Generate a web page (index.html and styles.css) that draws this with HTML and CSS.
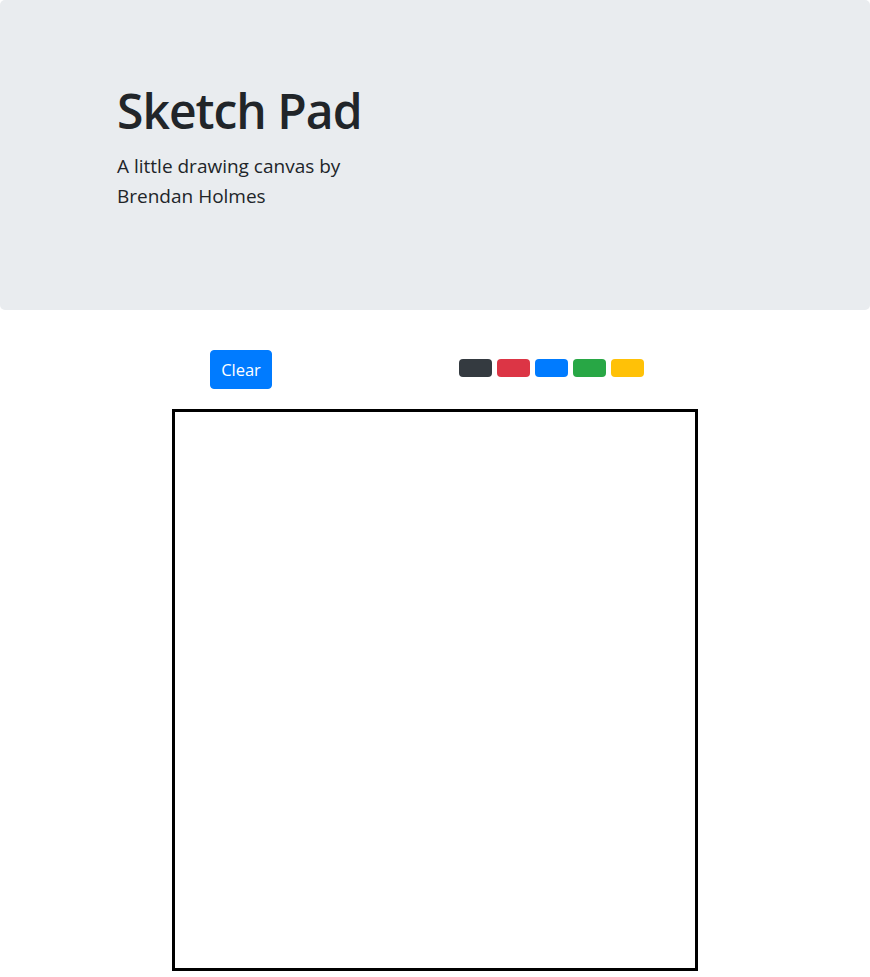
FILE: index.html
```html
<!DOCTYPE html>
<html lang="en">
<head>
<meta charset="utf-8">
<title>Sketch Pad</title>
<link rel="stylesheet" href="styles.css">
</head>
<body>
<header class="jumbotron">
  <div class="hero">
    <h1 class="title">Sketch Pad</h1>
    <p class="lead">A little drawing canvas by<br>Brendan Holmes</p>
  </div>
</header>
<main class="pad">
  <div class="controls">
    <button class="btn-clear" type="button">Clear</button>
    <div class="swatches">
      <span class="swatch swatch-dark"></span>
      <span class="swatch swatch-red"></span>
      <span class="swatch swatch-blue"></span>
      <span class="swatch swatch-green"></span>
      <span class="swatch swatch-yellow"></span>
    </div>
  </div>
  <div class="canvas"></div>
</main>
</body>
</html>
```
FILE: styles.css
```css
html, body {
  margin: 0;
  padding: 0;
  background: #fff;
}
body {
  font-family: "Open Sans", "Noto Sans", sans-serif;
  color: #212529;
}
.jumbotron {
  background: #e9ecef;
  border-radius: 5px;
  height: 310px;
  box-sizing: border-box;
  padding: 82px 0 0 117px;
}
.title {
  margin: 0;
  font-size: 48px;
  font-weight: 600;
  line-height: 58px;
  letter-spacing: -1px;
}
.lead {
  margin: 11px 0 0;
  font-size: 19px;
  line-height: 30px;
  font-weight: 400;
}
.pad {
  display: flex;
  flex-direction: column;
  align-items: center;
}
.controls {
  width: 870px;
  box-sizing: border-box;
  padding-left: 210px;
  margin-top: 40px;
  display: flex;
  align-items: flex-start;
}
.btn-clear {
  font-family: inherit;
  font-size: 16.5px;
  line-height: 24px;
  color: #fff;
  background: #007bff;
  border: 1px solid #007bff;
  border-radius: 4px;
  padding: 6px 0;
  width: 62px;
  height: 39px;
  box-sizing: border-box;
  text-align: center;
}
.swatches {
  display: flex;
  gap: 5px;
  margin-left: 187px;
  margin-top: 9px;
}
.swatch {
  display: block;
  width: 33px;
  height: 18px;
  border-radius: 4px;
}
.swatch-dark { background: #343a40; }
.swatch-red { background: #dc3545; }
.swatch-blue { background: #007bff; }
.swatch-green { background: #28a745; }
.swatch-yellow { background: #ffc107; }
.canvas {
  margin-top: 20px;
  width: 526px;
  height: 562px;
  box-sizing: border-box;
  border: 3px solid #000;
  background: #fff;
}
```
